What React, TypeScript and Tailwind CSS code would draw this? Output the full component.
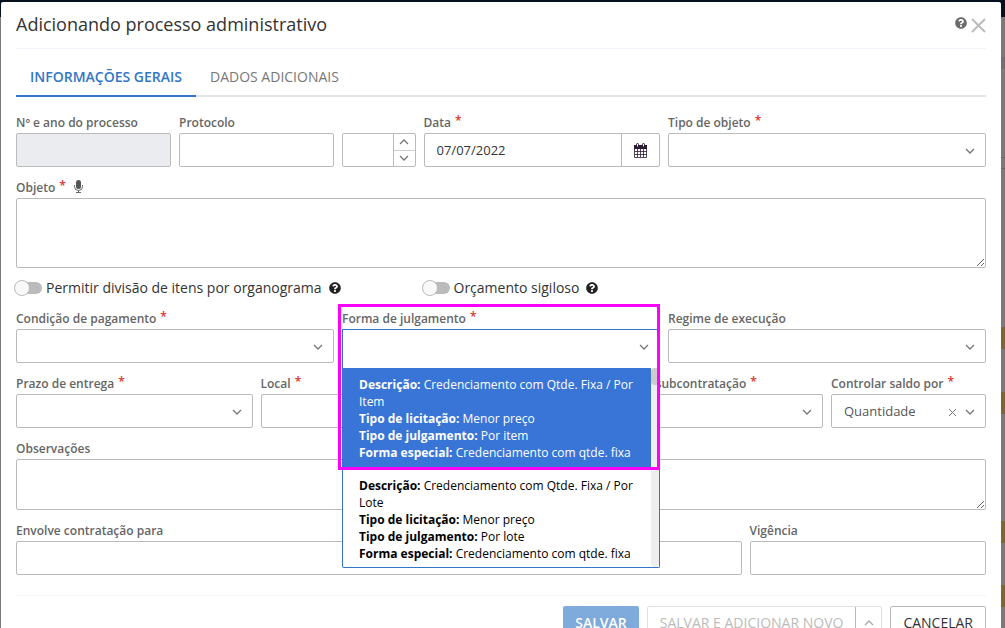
import type { ReactNode } from "react";
import { FaQuestionCircle } from "react-icons/fa";

const box = "block w-full rounded-xs border border-[#bbb] text-sm text-[#333] outline-none";

const options = [
  {
    description: "Credenciamento com Qtde. Fixa / Por Item",
    bidding: "Menor preço",
    judgement: "Por item",
    special: "Credenciamento com qtde. fixa",
  },
  {
    description: "Credenciamento com Qtde. Fixa / Por Lote",
    bidding: "Menor preço",
    judgement: "Por lote",
    special: "Credenciamento com qtde. fixa",
  },
];

export default function App() {
  return (
    <div className="relative h-screen overflow-hidden bg-[#7a7a7a] pt-0.5 pr-1 pl-px font-['Open_Sans',sans-serif] text-[#333]">
      <Backdrop />
      <div role="dialog" aria-labelledby="dialog-title" className="relative rounded-xs bg-white px-[15px] pb-4">
        <header className="flex h-[47px] items-center justify-between border-b border-[#f3f3fb]">
          <h1 id="dialog-title" className="pb-0.5 text-lg">
            Adicionando processo administrativo
          </h1>
          <div className="flex items-center gap-1">
            <button type="button" aria-label="Ajuda" className="pb-1 text-[#6b6b6b]">
              <FaQuestionCircle size={12} />
            </button>
            <button type="button" aria-label="Fechar">
              <CrossIcon size={15} color="#bbb" width={2} />
            </button>
          </div>
        </header>

        <nav role="tablist" className="mt-2 flex h-10 border-b-2 border-[#e1e3e9]">
          <button
            type="button"
            role="tab"
            aria-selected="true"
            className="-mb-0.5 border-b-2 border-[#3276c8] px-3.5 pt-0.5 text-sm font-semibold text-[#3276c8]"
          >
            INFORMAÇÕES GERAIS
          </button>
          <button type="button" role="tab" aria-selected="false" className="px-3.5 pt-0.5 text-sm text-[#777]">
            DADOS ADICIONAIS
          </button>
        </nav>

        <form className="mt-4">
          <div className="grid grid-cols-12 gap-x-2 gap-y-[11px]">
            <Field id="numero" label="Nº e ano do processo" className="col-span-2">
              <input id="numero" disabled className={`${box} h-[34px] bg-[#eaecf0]`} />
            </Field>
            <Field id="protocolo" label="Protocolo" className="col-span-2">
              <input id="protocolo" className={`${box} h-[34px] px-3`} />
            </Field>
            <div className="col-span-1 flex items-end">
              <div className="flex h-[34px] w-full rounded-xs border border-[#bbb]">
                <input aria-label="Ano do protocolo" className="w-0 flex-1 px-2 text-sm outline-none" />
                <div className="flex w-[22px] flex-col divide-y divide-[#ccc] border-l border-[#bbb]">
                  <button type="button" aria-label="Aumentar" className="flex flex-1 items-center justify-center">
                    <Chevron up />
                  </button>
                  <button type="button" aria-label="Diminuir" className="flex flex-1 items-center justify-center">
                    <Chevron />
                  </button>
                </div>
              </div>
            </div>
            <Field id="data" label="Data" required className="col-span-3">
              <div className="flex h-[34px] rounded-xs border border-[#bbb]">
                <input id="data" defaultValue="07/07/2022" className="w-0 flex-1 px-3 pt-0.5 text-[13px] outline-none" />
                <button
                  type="button"
                  aria-label="Abrir calendário"
                  className="flex w-[38px] items-center justify-center border-l border-[#bbb]"
                >
                  <CalendarIcon />
                </button>
              </div>
            </Field>
            <Field id="tipo-objeto" label="Tipo de objeto" required className="col-span-4">
              <Select id="tipo-objeto" />
            </Field>

            <Field id="objeto" label="Objeto" required icon={<MicrophoneIcon />} className="col-span-12">
              <textarea id="objeto" className={`${box} h-[70px] resize px-3 py-1`} />
            </Field>
          </div>

          <div className="grid h-[41px] grid-cols-12 items-center gap-x-2 pb-0.5">
            <Toggle id="divisao" label="Permitir divisão de itens por organograma" />
            <Toggle id="sigiloso" label="Orçamento sigiloso" />
          </div>

          <div className="grid grid-cols-12 gap-x-2 gap-y-[11px]">
            <Field id="condicao" label="Condição de pagamento" required className="col-span-4">
              <Select id="condicao" />
            </Field>
            <Field id="forma" label="Forma de julgamento" required className="relative col-span-4">
              <Select id="forma" open />
              <OptionList />
              <div className="pointer-events-none absolute -top-[5px] right-0 -left-1 z-20 h-[166px] border-3 border-[#ff00ff]" />
            </Field>
            <Field id="regime" label="Regime de execução" className="col-span-4">
              <Select id="regime" />
            </Field>

            <Field id="prazo" label="Prazo de entrega" required className="col-span-3">
              <Select id="prazo" />
            </Field>
            <Field id="local" label="Local" required className="col-span-4">
              <Select id="local" />
            </Field>
            <Field id="subcontratacao" label="Limite para subcontratação" required className="col-span-3">
              <Select id="subcontratacao" />
            </Field>
            <Field id="saldo" label="Controlar saldo por" required className="col-span-2">
              <Select id="saldo" value="Quantidade" />
            </Field>

            <Field id="observacoes" label="Observações" className="col-span-12">
              <textarea id="observacoes" className={`${box} h-[51px] resize px-3 py-1`} />
            </Field>

            <Field id="envolve" label="Envolve contratação para" className="col-span-9">
              <input id="envolve" className={`${box} h-[34px] px-3`} />
            </Field>
            <Field id="vigencia" label="Vigência" className="col-span-3">
              <input id="vigencia" className={`${box} h-[34px] px-3`} />
            </Field>
          </div>
        </form>

        <footer className="mt-5 flex justify-end gap-2 border-t border-[#f3f3f6] pt-2.5 text-sm">
          <button type="button" className="h-[34px] rounded-xs bg-[#7faadc] px-3 font-semibold text-white">
            SALVAR
          </button>
          <div className="flex h-[34px] rounded-xs border border-[#dfe1e6] text-[#bbb]">
            <button type="button" disabled className="px-3">
              SALVAR E ADICIONAR NOVO
            </button>
            <button
              type="button"
              disabled
              aria-label="Mais opções"
              className="flex w-[26px] items-center justify-center border-l border-[#bbb]"
            >
              <Chevron up muted />
            </button>
          </div>
          <button type="button" className="h-[34px] rounded-xs border border-[#bbb] px-3">
            CANCELAR
          </button>
        </footer>
      </div>
    </div>
  );
}

function Backdrop() {
  return (
    <div aria-hidden="true">
      <div className="absolute inset-x-0 top-0 h-[17px] bg-[#06111f]" />
      <div className="absolute top-[57px] right-0 h-3 w-1 bg-[#6e7074]" />
      <div className="absolute top-[157px] right-0 h-3 w-1 border-y border-[#666]" />
      <div className="absolute top-[327px] right-0 h-[22px] w-1 bg-[#7d6534]" />
      <div className="absolute top-[392px] right-0 h-[22px] w-1 bg-[#7d6534]" />
      <div className="absolute top-[521px] right-0 h-[22px] w-1 bg-[#7d6534]" />
      <div className="absolute top-[585px] right-0 h-[22px] w-1 bg-[#7d6534]" />
    </div>
  );
}

function Field({
  id,
  label,
  required,
  icon,
  className,
  children,
}: {
  id: string;
  label: string;
  required?: boolean;
  icon?: ReactNode;
  className: string;
  children: ReactNode;
}) {
  return (
    <div className={className}>
      <div className="flex h-5 items-center whitespace-nowrap text-xs font-semibold text-[#666]">
        <label htmlFor={id}>{label}</label>
        {required && <span className="mb-1 ml-1 leading-4 text-[#e0302a]">*</span>}
        {icon}
      </div>
      {children}
    </div>
  );
}

function Select({ id, value, open }: { id: string; value?: string; open?: boolean }) {
  return (
    <div className="relative">
      <select
        id={id}
        className={`h-[34px] w-full appearance-none bg-white px-3 pt-0.5 text-[13px] text-[#555] outline-none ${
          open ? "border-x border-t border-[#3276c8]" : "rounded-xs border border-[#bbb]"
        }`}
      >
        <option>{value ?? ""}</option>
      </select>
      <div className="pointer-events-none absolute inset-y-0 right-[11px] flex items-center gap-2 pt-0.5">
        {value && <CrossIcon size={9} color="#777" width={1} />}
        <Chevron />
      </div>
    </div>
  );
}

function OptionList() {
  return (
    <div className="absolute inset-x-0 top-[54px] z-10 flex h-[205px] rounded-b-xs border-x border-b border-[#3276c8] bg-white pt-[5px] text-xs text-black">
      <ul role="listbox" aria-label="Forma de julgamento" className="min-w-0 flex-1 overflow-hidden">
        {options.map((o, i) => (
          <li
            key={o.description}
            role="option"
            aria-selected={i === 0}
            className={`px-4 py-2 leading-[17px] ${i === 0 ? "bg-[#3875d7] text-white" : ""}`}
          >
            <Line name="Descrição" value={o.description} />
            <Line name="Tipo de licitação" value={o.bidding} />
            <Line name="Tipo de julgamento" value={o.judgement} />
            <Line name="Forma especial" value={o.special} />
          </li>
        ))}
      </ul>
      <div className="w-2 rounded bg-[#eee]">
        <div className="h-[17px] rounded bg-[#ccc]" />
      </div>
    </div>
  );
}

function Line({ name, value }: { name: string; value: string }) {
  return (
    <div>
      <b className="font-bold">{name}:</b> {value}
    </div>
  );
}

function Toggle({ id, label }: { id: string; label: string }) {
  return (
    <div className="col-span-5 -ml-0.5 flex items-center">
      <input id={id} type="checkbox" role="switch" className="peer sr-only" />
      <label htmlFor={id} className="flex items-center gap-1 text-sm">
        <span className="flex h-3 w-7 items-center rounded-full bg-[#bbb]">
          <span className="size-4 rounded-full border border-[#bbb] bg-[#fafafa]" />
        </span>
        {label}
      </label>
      <FaQuestionCircle size={12} className="ml-[7px] text-[#222]" />
    </div>
  );
}

function Chevron({ up, muted }: { up?: boolean; muted?: boolean }) {
  return (
    <svg width="10" height="6" viewBox="0 0 10 6" fill="none" stroke={muted ? "#aaa" : "#777"} strokeWidth="1.3">
      <path d={up ? "M1 5l4-4 4 4" : "M1 1l4 4 4-4"} />
    </svg>
  );
}

function CrossIcon({ size, color, width }: { size: number; color: string; width: number }) {
  return (
    <svg width={size} height={size} viewBox={`0 0 ${size} ${size}`} stroke={color} strokeWidth={width}>
      <path d={`M1 1L${size - 1} ${size - 1}M${size - 1} 1L1 ${size - 1}`} />
    </svg>
  );
}

function MicrophoneIcon() {
  return (
    <svg width="9" height="13" viewBox="0 0 9 13" fill="none" stroke="#666" className="mb-1 ml-2">
      <rect x="2" y="0" width="5" height="9" rx="2.5" fill="#555" stroke="none" />
      <path d="M.5 5v1.500a4 4 0 0 0 8 0V5M4.500 10.500v2M2 12.500h5" />
    </svg>
  );
}

function CalendarIcon() {
  return (
    <svg width="13" height="15" viewBox="0 0 13 15" fill="none" stroke="#2a1a35">
      <path d="M0 2h13v4H0z" fill="#2a1a35" stroke="none" />
      <path d="M.5 3v11.500h12V3M.5 8.500h12M.5 11.500h12M3.500 5v9M6.500 5v9M9.500 5v9" strokeWidth="0.8" />
      <path d="M2.500 4V1.500a1 1 0 0 1 2 0V4zM8.500 4V1.500a1 1 0 0 1 2 0V4z" fill="#fff" />
    </svg>
  );
}
